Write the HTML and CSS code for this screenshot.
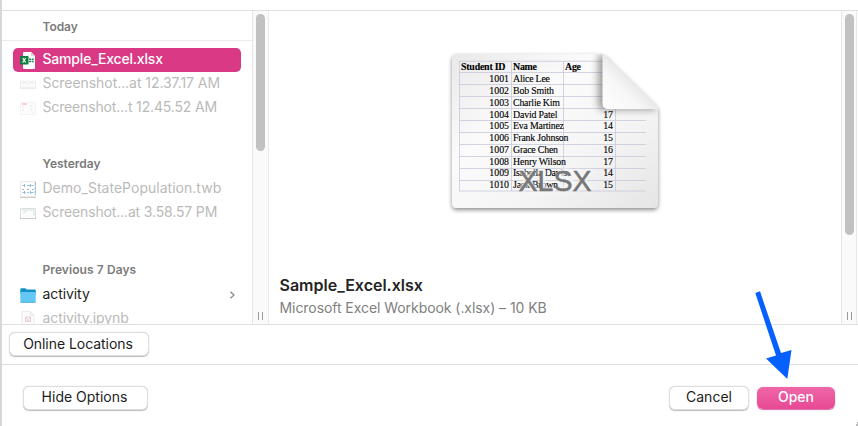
FILE: index.html
```html
<!DOCTYPE html>
<html lang="en">
<head>
<meta charset="utf-8">
<title>Open</title>
<link rel="stylesheet" href="styles.css">
</head>
<body>
<main class="dialog">
  <section class="browser">
    <nav class="files">
      <h2 class="group group-first"><span class="w-today">Today</span></h2>
      <div class="file selected">
        <svg class="icon" viewBox="0 0 16 17"><path d="M4 0h7l4 4v12a1 1 0 0 1-1 1H4a1 1 0 0 1-1-1V1a1 1 0 0 1 1-1z" fill="#fff"/><path d="M11 0v4h4z" fill="#d5d5d5"/><path d="M9 6.500h2v1.500H9zm2.700 0h2v1.500h-2zM9 8.700h2v1.500H9zm2.700 0h2v1.500h-2z" fill="#1b8a4b"/><rect y="4" width="8.5" height="8.5" rx=".7" fill="#107c41"/><path d="M2.700 6l3 4.500m0-4.500l-3 4.500" stroke="#fff" stroke-width="1.200"/></svg>
        <span class="w-sample">Sample_Excel.xlsx</span>
      </div>
      <div class="file dim">
        <svg class="icon" viewBox="0 0 16 17"><path d="M.5 5h15v7H.5z" fill="#fafafa" stroke="#f0f0f0"/><path d="M2 6.500h5m3 0h4M7 8h2" stroke="#e2e2e2" stroke-width=".7"/><path d="M0 12.200h16" stroke="#e2e2e2" stroke-width=".8"/></svg>
        <span class="w-shot1">Screenshot...at 12.37.17 AM</span>
      </div>
      <div class="file dim">
        <svg class="icon" viewBox="0 0 16 17"><path d="M.5 2.500h15v12H.5z" fill="#fcfcfc" stroke="#f3f3f3"/><path d="M2 4h5" stroke="#f7bfd6" stroke-width="1.400"/><path d="M2 7h2m-2 3h2m5-4h3m-2 3h2m-1 3h2" stroke="#eee4e9"/></svg>
        <span class="w-shot2">Screenshot...t 12.45.52 AM</span>
      </div>
      <h2 class="group"><span class="w-yesterday">Yesterday</span></h2>
      <div class="file dim">
        <svg class="icon" viewBox="0 0 16 17"><path d="M0 16.500h16" stroke="#ccc"/><path d="M.5.5h15v15H.5z" fill="#fdfdfd" stroke="#e8e8e8"/><path d="M2.500 4.500H5m2 0h3m1.500 0h2M4.500 3v3m6-3v3M2 8.500h2m3 0h2m3 0h2M2.500 11.500h3m1.500 0h2m1.500 0h3M4.500 10v3m6-3v3" stroke="#8db7d0" stroke-width=".9"/><path d="M15.300 1.500v12.500" stroke="#8ebbd5" stroke-width="1.200" stroke-dasharray="3 1"/></svg>
        <span class="w-demo">Demo_StatePopulation.twb</span>
      </div>
      <div class="file dim">
        <svg class="icon" viewBox="0 0 16 17"><path d="M.5 3.500h15v10H.5z" fill="#fcfcfc" stroke="#dedede"/><path d="M0 13.500h16" stroke="#ccc"/><path d="M2 5h12v6M5 6.500h2M3 8h2" stroke="#cbe0d8" stroke-width=".8" fill="none"/></svg>
        <span class="w-shot3">Screenshot...at 3.58.57 PM</span>
      </div>
      <h2 class="group group-third"><span class="w-previous">Previous 7 Days</span></h2>
      <div class="file">
        <svg class="icon" viewBox="0 0 16 17"><path d="M.3 2.300q0-1 1-1h4l1.500 1.200h8q1 0 1 1v4H.3z" fill="#168fc8"/><path d="M.3 5h15.400v9.500q0 1-1 1H1.300q-1 0-1-1z" fill="#65c8f4"/><path d="M.6 15.300h14.800" stroke="#3aa6da" stroke-width=".8"/></svg>
        <span class="w-activity">activity</span>
        <svg class="chevron" viewBox="0 0 6 8"><path d="M1.500.7L5 4 1.500 7.300" fill="none" stroke="#858585" stroke-width="1.200"/></svg>
      </div>
      <div class="file dim">
        <svg class="icon" viewBox="0 0 16 17"><path d="M2 .5h8.500L14 4v14H2z" fill="#fbfbfb" stroke="#ebebeb"/><path d="M10.500.5V4H14" fill="none" stroke="#e3e3e3"/><path d="M5.500 6h5v4.500h-5zM6 7l3 3M9.500 7l-3 3" fill="none" stroke="#e3caca" stroke-width=".9"/></svg>
        <span class="w-ipynb">activity.ipynb</span>
      </div>
    </nav>
    <div class="track"><i class="thumb thumb-list"></i><i class="grip"></i></div>
    <article class="preview">
      <svg class="document" viewBox="0 0 230 175">
        <defs>
          <linearGradient id="paper" x1="0" y1="0" x2="1" y2="1"><stop offset="0" stop-color="#e9e9e9"/><stop offset=".35" stop-color="#fbfbfb"/><stop offset=".65" stop-color="#f5f5f5"/><stop offset="1" stop-color="#e5e5e5"/></linearGradient>
          <linearGradient id="curl" x1="0" y1="1" x2=".65" y2=".35"><stop offset="0" stop-color="#fff"/><stop offset=".55" stop-color="#f7f7f7"/><stop offset="1" stop-color="#dedede"/></linearGradient>
          <filter id="shadow" x="-10%" y="-10%" width="120%" height="125%"><feDropShadow dx="0" dy="2" stdDeviation="2" flood-opacity=".45"/></filter>
          <filter id="soft" x="-30%" y="-30%" width="160%" height="160%"><feGaussianBlur stdDeviation="3.500"/></filter>
          <filter id="glow" x="-10%" y="-20%" width="120%" height="140%"><feGaussianBlur stdDeviation="1"/></filter>
          <clipPath id="page"><path d="M17 9h145q2 0 4 2l50 49q2 2 2 4v94q0 5-5 5H17q-5 0-5-5V14q0-5 5-5z"/></clipPath>
        </defs>
        <path d="M17 9h145q2 0 4 2l50 49q2 2 2 4v94q0 5-5 5H17q-5 0-5-5V14q0-5 5-5z" fill="url(#paper)" filter="url(#shadow)"/>
        <path d="M19 16.300h144M19 27.500h144M19 39.500h144M19 51.500h144M19 63.500h187M19 75.500h187M19 87.500h187M19 99.500h187M19 111.500h187M19 123.500h187M19 135.500h187M19 146h187M19.500 16v130M71.500 16v130M123.500 16v130M175.500 64v82" fill="none" stroke="#c8c8db" stroke-width=".8"/>
        <g class="sheet-head">
          <text x="21" y="25" textLength="44.500">Student ID</text><text x="73" y="25" textLength="24">Name</text><text x="125" y="25" textLength="16">Age</text>
        </g>
        <g class="sheet-id">
          <text x="69" y="37">1001</text><text x="69" y="49">1002</text><text x="69" y="61">1003</text><text x="69" y="72.500">1004</text><text x="69" y="84.300">1005</text><text x="69" y="96.300">1006</text><text x="69" y="108">1007</text><text x="69" y="119.700">1008</text><text x="69" y="131.400">1009</text><text x="69" y="143">1010</text>
        </g>
        <g class="sheet-name">
          <text x="73" y="37" textLength="37">Alice Lee</text><text x="73" y="49" textLength="41">Bob Smith</text><text x="73" y="61" textLength="47">Charlie Kim</text><text x="73" y="72.500" textLength="44.500">David Patel</text><text x="73" y="84.300" textLength="51">Eva Martinez</text><text x="73" y="96.300" textLength="55.500">Frank Johnson</text><text x="73" y="108" textLength="45">Grace Chen</text><text x="73" y="119.700" textLength="53">Henry Wilson</text><text x="73" y="131.400" textLength="54">Isabella Davis</text><text x="73" y="143" textLength="45">Jack Brown</text>
        </g>
        <g class="sheet-id">
          <text x="173" y="72.500">17</text><text x="173" y="84.300">14</text><text x="173" y="96.300">15</text><text x="173" y="108">16</text><text x="173" y="119.700">17</text><text x="173" y="131.400">14</text><text x="173" y="143">15</text>
        </g>
        <path d="M81 125l14 20m0-20l-14 20M103 125v20h12M133 128q-12-5-13 1c0 6 13 5 13 11q-2 7-14 2M137 125l13 20m0-20l-13 20" fill="none" stroke="#f7f7f7" stroke-width="5" opacity=".85" filter="url(#glow)"/>
        <text class="kind" x="78.500" y="145.500" textLength="73" lengthAdjust="spacingAndGlyphs">XLSX</text>
        <g clip-path="url(#page)"><path d="M158 9v50q0 6 6 6h54L165 10z" fill="#555" opacity=".55" filter="url(#soft)"/></g>
        <path d="M162.500 9.500V58q0 6 6 6H213q3 0 5 1-1-3-2-5l-50-49q-1.500-1.500-3.500-1.500z" fill="url(#curl)"/>
      </svg>
      <h1 class="name"><span class="w-name">Sample_Excel.xlsx</span></h1>
      <p class="detail"><span class="w-detail">Microsoft Excel Workbook (.xlsx) – 10 KB</span></p>
    </article>
    <div class="track track-right"><i class="thumb thumb-preview"></i><i class="grip"></i></div>
  </section>
  <section class="locations"><button class="button online"><span class="w-online">Online Locations</span></button></section>
  <footer class="actions">
    <button class="button options"><span class="w-options">Hide Options</span></button>
    <button class="button cancel"><span class="w-cancel">Cancel</span></button>
    <button class="button open"><span class="w-open">Open</span></button>
  </footer>
  <svg class="pointer" viewBox="0 0 40 90"><path d="M1.300 1L6-.7 27 61l10.500-3L33.300 87 12 66.500l10-3z" fill="#0560fd"/></svg>
  <i class="corner"></i>
</main>
</body>
</html>
```

FILE: styles.css
```css
* { box-sizing: border-box; }
body { margin: 0; background: #fff; font-family: Inter, "Liberation Sans", sans-serif; font-size: 14px; color: #1e1e1e; }
h1, h2, p { margin: 0; }
span { white-space: nowrap; }
.dialog { position: relative; width: 858px; height: 426px; padding-top: 10px; border-left: 2px solid #d3d8d8; overflow: hidden; }
.browser { display: flex; height: 315px; border-top: 1px solid #e0e0e0; border-bottom: 1px solid #e0e0e0; overflow: hidden; }
.files { width: 250px; flex: none; overflow: hidden; }
.group { height: 57px; padding: 32px 0 0 40.5px; font-size: 12px; line-height: 24px; font-weight: 600; color: #7b7b7b; }
.group-first { height: 30px; padding-top: 4px; margin-bottom: 7px; border-bottom: 1px solid #ebebeb; }
.group-third { height: 58px; padding-top: 33px; }
.file { display: flex; align-items: center; height: 24px; margin: 0 11px; padding: 0 4px 0 7px; line-height: 22px; }
.file span { padding-bottom: 2px; }
.icon { width: 16px; height: 17px; margin-right: 6.5px; flex: none; }
.file.selected { background: #da3985; color: #fff; border-radius: 5px; font-weight: 500; }
.dim { color: #bababa; }
.chevron { width: 6px; height: 8px; margin-left: auto; margin-right: 2px; }
.w-today { letter-spacing: -.07px; }
.w-sample { letter-spacing: -.19px; }
.w-shot1 { letter-spacing: -.06px; }
.w-shot2 { letter-spacing: -.15px; }
.w-demo { letter-spacing: .02px; }
.w-shot3 { letter-spacing: -.15px; }
.w-previous { letter-spacing: .08px; }
.w-ipynb { letter-spacing: -.1px; }
.w-activity { letter-spacing: -.08px; }
.w-detail { letter-spacing: -.06px; }
.track { display: flex; flex-direction: column; justify-content: space-between; align-items: center; width: 17px; flex: none; padding: 3px 0 4px; background: #fafafa; border-left: 1px solid #e5e5e5; border-right: 1px solid #e8e8e8; }
.track-right { width: 16px; }
.thumb { width: 9px; border-radius: 5px; background: #c1c1c1; }
.thumb-list { height: 137px; }
.thumb-preview { height: 221px; }
.grip { width: 5px; height: 8px; border-left: 1px solid #999; border-right: 1px solid #999; }
.preview { width: 572px; flex: none; padding: 34px 0 0 10.5px; }
.document { display: block; width: 230px; height: 175px; margin-left: 160.500px; }
.sheet-head, .sheet-id, .sheet-name { font-family: "Liberation Serif", serif; font-size: 9.9px; fill: #000; stroke: #000; stroke-width: .12px; }
.sheet-head { font-weight: 700; }
.sheet-id { text-anchor: end; }
.kind { font-family: "Liberation Sans", sans-serif; font-size: 30px; fill: #777; stroke: #777; stroke-width: .5px; }
.name { margin-top: 53px; font-size: 16px; line-height: 24px; font-weight: 600; color: #242424; }
.detail { font-size: 14px; line-height: 21px; color: #808080; }
.locations { height: 40px; padding: 7px 0 0 7px; border-bottom: 1px solid #dedede; }
.button { display: block; height: 24px; padding: 0 0 1px; border: 1px solid #dedede; border-radius: 6px; background: #fff; box-shadow: 0 .5px 1px #bbb; font: inherit; line-height: 20px; color: #1c1c1c; text-align: center; }
.online { width: 140px; padding-right: 2px; letter-spacing: -.05px; }
.actions { display: flex; padding: 21px 23px 0 21px; }
.options { width: 125px; padding: 0 2px 2px 0; }
.cancel { width: 80px; margin-left: auto; margin-right: 8px; padding-bottom: 2px; }
.open { width: 78px; height: 22px; margin-top: 1px; padding-bottom: 2px; border: 0; background: linear-gradient(#ee67a8, #e84892); color: #fff; font-weight: 500; box-shadow: 0 .5px 1px #d6a; }
.pointer { position: absolute; left: 752px; top: 292px; width: 40px; height: 90px; overflow: visible; }
.corner { position: absolute; right: 0; bottom: 0; width: 2px; height: 6px; background: linear-gradient(110deg, #fff 50%, #bbb 50%); }
```
